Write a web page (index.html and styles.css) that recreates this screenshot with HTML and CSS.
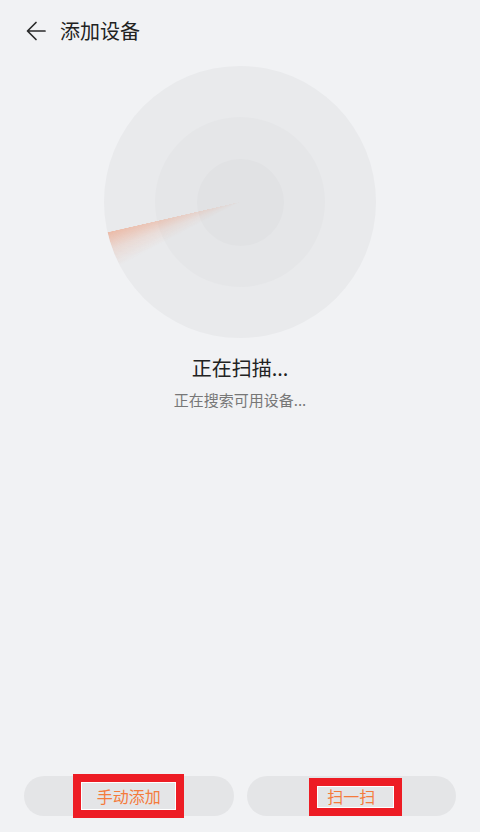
FILE: index.html
```html
<!DOCTYPE html>
<html lang="zh-CN">
<head>
<meta charset="utf-8">
<title>添加设备</title>
<link rel="stylesheet" href="styles.css">
</head>
<body>
<div class="page">
  <header class="header">
    <svg class="back" viewBox="0 0 20 20" width="20" height="20" aria-hidden="true">
      <path d="M19 10H2M10 1.5L1.5 10L10 18.5" fill="none" stroke="#2a2a2a" stroke-width="1.7" stroke-linecap="round" stroke-linejoin="round"/>
    </svg>
    <h1 class="title">添加设备</h1>
  </header>
  <main class="main">
    <div class="radar">
      <div class="ring ring-mid">
        <div class="ring ring-inner"></div>
      </div>
      <div class="sweep"></div>
    </div>
    <p class="status">正在扫描...</p>
    <p class="sub">正在搜索可用设备...</p>
  </main>
  <footer class="footer">
    <button class="btn">手动添加<span class="mark mark-left"></span></button>
    <button class="btn">扫一扫<span class="mark mark-right"></span></button>
  </footer>
</div>
</body>
</html>
```

FILE: styles.css
```css
* { box-sizing: border-box; }
html, body {
  margin: 0;
  padding: 0;
  background: #f1f2f4;
  font-family: "Noto Sans CJK SC", "Noto Sans", sans-serif;
}
.page {
  width: 480px;
  height: 832px;
  display: flex;
  flex-direction: column;
}
.header {
  height: 62px;
  display: flex;
  align-items: center;
  padding-left: 26px;
}
.back {
  display: block;
  width: 20px;
  height: 20px;
}
.title {
  margin: 0 0 0 14px;
  font-size: 20px;
  font-weight: 400;
  color: #222;
  line-height: 28px;
}
.main {
  flex: 1;
  display: flex;
  flex-direction: column;
  align-items: center;
}
.radar {
  position: relative;
  margin-top: 4px;
  width: 272px;
  height: 272px;
  border-radius: 50%;
  background: #e9eaec;
  display: flex;
  align-items: center;
  justify-content: center;
}
.ring {
  border-radius: 50%;
  display: flex;
  align-items: center;
  justify-content: center;
}
.ring-mid {
  width: 170px;
  height: 170px;
  background: #e5e6e8;
}
.ring-inner {
  width: 87px;
  height: 87px;
  background: #e1e2e4;
}
.sweep {
  position: absolute;
  inset: 0;
  border-radius: 50%;
  background: conic-gradient(from 0deg at 50% 50%,
    rgba(238, 140, 100, 0) 0deg,
    rgba(238, 140, 100, 0) 242deg,
    rgba(238, 140, 100, 0.18) 250deg,
    rgba(238, 140, 100, 0.5) 257deg,
    rgba(238, 140, 100, 0) 257.2deg);
  -webkit-mask-image: radial-gradient(circle closest-side, rgba(0,0,0,0.1) 0%, rgba(0,0,0,0.7) 60%, rgba(0,0,0,1) 100%);
  mask-image: radial-gradient(circle closest-side, rgba(0,0,0,0.1) 0%, rgba(0,0,0,0.7) 60%, rgba(0,0,0,1) 100%);
}
.status {
  margin: 16px 0 0;
  font-size: 20px;
  line-height: 28px;
  color: #222;
}
.sub {
  margin: 8px 0 0;
  font-size: 15px;
  line-height: 20px;
  color: #777;
}
.footer {
  display: flex;
  gap: 13px;
  padding: 0 24px 16px;
}
.btn {
  position: relative;
  flex: 1;
  height: 40px;
  border: 0;
  border-radius: 20px;
  background: #e4e5e7;
  color: #f47b3c;
  font-family: inherit;
  font-size: 16px;
  padding: 0;
}
.mark {
  position: absolute;
  border: 8px solid #ed1c24;
  box-shadow: inset 0 0 0 1px #ffffff;
}
.mark-left {
  left: 49px;
  top: -2px;
  width: 111px;
  height: 44px;
}
.mark-right {
  left: 62px;
  top: 2px;
  width: 93px;
  height: 38px;
}
```
